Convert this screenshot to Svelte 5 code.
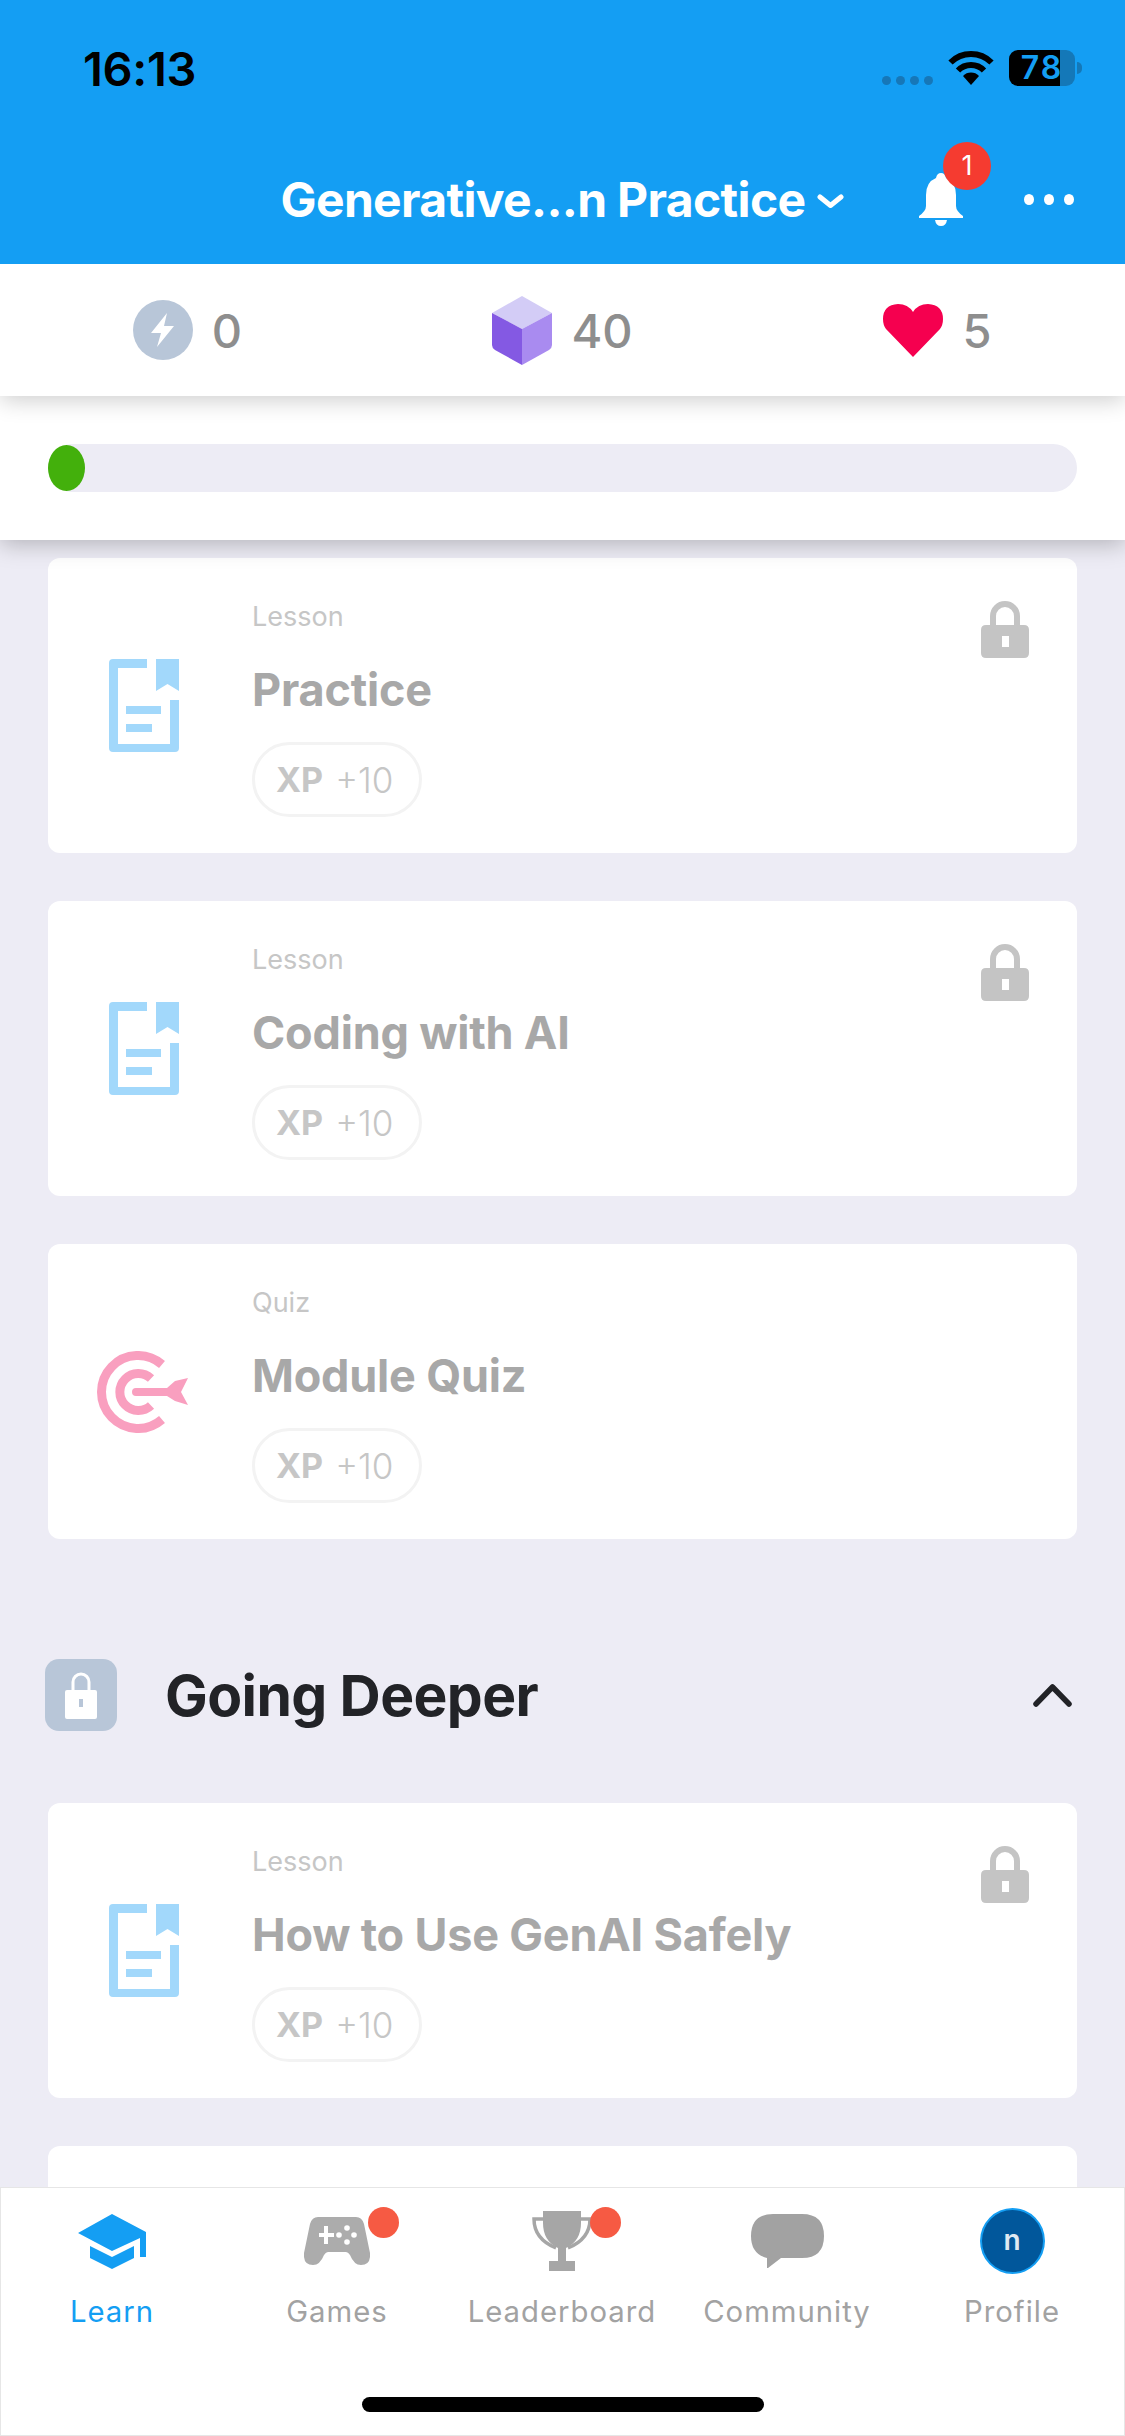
<script>
  const firstCards = [
    { kind: 'Lesson', title: 'Practice', icon: 'doc', locked: true },
    { kind: 'Lesson', title: 'Coding with AI', icon: 'doc', locked: true },
    { kind: 'Quiz', title: 'Module Quiz', icon: 'target', locked: false }
  ];
  const secondCards = [
    { kind: 'Lesson', title: 'How to Use GenAI Safely', icon: 'doc', locked: true }
  ];
  const tabs = [
    { label: 'Learn', icon: 'cap', active: true },
    { label: 'Games', icon: 'pad', dot: true },
    { label: 'Leaderboard', icon: 'trophy', dot: true },
    { label: 'Community', icon: 'chat' },
    { label: 'Profile', icon: 'avatar' }
  ];
</script>

{#snippet card(item)}
  <div class="card">
    <div class="card-icon">
      {#if item.icon === 'doc'}
        <svg width="70" height="93" viewBox="0 0 70 93">
          <path fill="#a2d8fb" d="M4 0H38V9H9V85H61V41H70V89Q70 93 66 93H4Q0 93 0 89V4Q0 0 4 0Z" />
          <path fill="#a2d8fb" d="M47 0H70V32L58.500 25L47 32Z" />
          <rect x="17" y="47" width="35" height="8" fill="#a2d8fb" />
          <rect x="17" y="65" width="26" height="8" fill="#a2d8fb" />
        </svg>
      {:else}
        <svg class="target" width="91" height="82" viewBox="0 0 91 82">
          <path fill="none" stroke="#f99fbf" stroke-width="9" d="M65 13.500A36.500 36.500 0 1 0 65 68.500" />
          <path fill="none" stroke="#f99fbf" stroke-width="9" d="M54 27.500A18.500 18.500 0 1 0 54 54.500" />
          <path fill="#f99fbf" d="M39 37H70L78 30L91 27L84 41L91 54L78 50L70 45H39A4 4 0 0 1 39 37Z" />
        </svg>
      {/if}
    </div>
    <div class="card-body">
      <div class="kind">{item.kind}</div>
      <div class="title">{item.title}</div>
      <div class="pill"><b>XP</b><span>+10</span></div>
    </div>
    {#if item.locked}
      <svg class="card-lock" width="48" height="57" viewBox="0 0 48 57">
        <path fill="none" stroke="#c4c4c4" stroke-width="6" d="M12 26V15A12 12 0 0 1 36 15V26" />
        <path fill="#c4c4c4" fill-rule="evenodd" d="M5 24H43Q48 24 48 29V52Q48 57 43 57H5Q0 57 0 52V29Q0 24 5 24ZM21 35V46H28V35Z" />
      </svg>
    {/if}
  </div>
{/snippet}

<div class="phone">
  <header class="top">
    <div class="status">
      <span class="time">16:13</span>
      <div class="status-right">
        <div class="cells"><i></i><i></i><i></i><i></i></div>
        <svg width="46" height="34" viewBox="0 0 46 34">
          <path fill="none" stroke="#000" stroke-width="6" d="M2.500 11.500A29 29 0 0 1 43.500 11.500" />
          <path fill="none" stroke="#000" stroke-width="6" d="M10 19.500A18 18 0 0 1 36 19.500" />
          <path d="M23 34L15 25A11 11 0 0 1 31 25Z" />
        </svg>
        <div class="battery">78</div>
        <div class="nub"></div>
      </div>
    </div>
    <div class="nav">
      <div></div>
      <div class="course">
        <span>Generative...n Practice</span>
        <svg width="27" height="14" viewBox="0 0 27 14">
          <path fill="none" stroke="#fff" stroke-width="5" stroke-linecap="round" stroke-linejoin="round" d="M3 3L13.500 11.500L24 3" />
        </svg>
      </div>
      <div class="actions">
        <div class="bell">
          <svg width="44" height="53" viewBox="0 0 44 53">
            <path fill="#fff" d="M22 0Q26 0 27 5Q37 9 37 22V33Q37 38 44 43V45H0V43Q7 38 7 33V22Q7 9 17 5Q18 0 22 0Z" />
            <path fill="#fff" d="M16 47H28Q27 53 22 53Q17 53 16 47Z" />
          </svg>
          <span class="bell-badge">1</span>
        </div>
        <div class="dots"><i></i><i></i><i></i></div>
      </div>
    </div>
  </header>

  <div class="stats">
    <div class="stat">
      <svg width="60" height="60" viewBox="0 0 60 60">
        <circle cx="30" cy="30" r="30" fill="#b8c6d8" />
        <path fill="#fff" d="M34 13L18 33H28L24 47L41 26H31Z" />
      </svg>
      <span>0</span>
    </div>
    <div class="stat">
      <svg width="60" height="69" viewBox="0 0 60 69">
        <path fill="#d3ccf6" d="M30 0L60 17L30 33L0 17Z" />
        <path fill="#8459e3" d="M0 17L30 33V69L3 54Q0 52 0 49Z" />
        <path fill="#a98bf0" d="M60 17L30 33V69L57 54Q60 52 60 49Z" />
      </svg>
      <span>40</span>
    </div>
    <div class="stat">
      <svg width="60" height="53" viewBox="0 0 60 53">
        <path fill="#f5004f" d="M30 53L3 25Q0 21 0 15Q0 1 15 0Q25 0 30 8Q35 0 45 0Q60 1 60 15Q60 21 57 25Z" />
      </svg>
      <span>5</span>
    </div>
  </div>

  <div class="progress">
    <div class="track"><div class="fill"></div></div>
  </div>

  <main class="list">
    <div class="cards">
      {#each firstCards as item}
        {@render card(item)}
      {/each}
    </div>
    <div class="section">
      <div class="section-lock">
        <svg width="32" height="48" viewBox="0 0 32 48">
          <path fill="none" stroke="#fff" stroke-width="3" d="M8 20V11A8 8 0 0 1 24 11V20" />
          <path fill="#fff" fill-rule="evenodd" d="M2 19H30Q32 19 32 21V46Q32 48 30 48H2Q0 48 0 46V21Q0 19 2 19ZM14 28V36H18V28Z" />
        </svg>
      </div>
      <h2>Going Deeper</h2>
      <svg width="39" height="24" viewBox="0 0 39 24">
        <path fill="none" stroke="#222327" stroke-width="5.500" stroke-linecap="round" stroke-linejoin="round" d="M3 21L19.500 4L36 21" />
      </svg>
    </div>
    <div class="cards">
      {#each secondCards as item}
        {@render card(item)}
      {/each}
      <div class="card"></div>
    </div>
  </main>

  <nav class="tabs">
    {#each tabs as tab}
      <div class="tab" class:active={tab.active}>
        <div class="tab-icon">
          {#if tab.icon === 'cap'}
            <svg width="68" height="55" viewBox="0 0 68 55">
              <path fill="#149ef3" d="M34 0L68 18V43H62V24L34 37L0 19Z" />
              <path fill="#149ef3" d="M12 32L34 43L56 32V44L34 55L12 44Z" />
            </svg>
          {:else if tab.icon === 'pad'}
            <svg width="66" height="48" viewBox="0 0 66 48">
              <path fill="#acacac" d="M14 0H52Q58 0 60 7L66 36Q67 48 57 48Q50 48 46 38Q44 35 42 35H24Q22 35 20 38Q16 48 9 48Q-1 48 0 36L6 7Q8 0 14 0Z" />
              <path fill="#fff" d="M20 9H24V16H30V20H24V27H20V20H15V16H20Z" />
              <circle cx="35" cy="18" r="2.800" fill="#fff" />
              <circle cx="43" cy="11" r="2.800" fill="#fff" />
              <circle cx="43" cy="25" r="2.800" fill="#fff" />
              <circle cx="50" cy="18" r="2.800" fill="#fff" />
            </svg>
          {:else if tab.icon === 'trophy'}
            <svg width="60" height="60" viewBox="0 0 60 60">
              <path fill="none" stroke="#a6a6a6" stroke-width="3.500" d="M12 8H2Q2 28 24 37M48 8H58Q58 28 36 37" />
              <path fill="#a6a6a6" d="M11 0H49V12Q49 30 34 37V50H43V60H17V50H26V37Q11 30 11 12Z" />
            </svg>
          {:else if tab.icon === 'chat'}
            <svg width="73" height="54" viewBox="0 0 73 54">
              <path fill="#a2a2a2" d="M22 0H51Q73 0 73 22Q73 44 51 44H30L17 54H16V44Q0 40 0 22Q0 0 22 0Z" />
            </svg>
          {:else}
            <div class="avatar">n</div>
          {/if}
          {#if tab.dot}<span class="dot"></span>{/if}
        </div>
        <span class="tab-label">{tab.label}</span>
      </div>
    {/each}
    <div class="home"></div>
  </nav>
</div>

<style>
  :global(body) {
    margin: 0;
    background: #edecf5;
  }
  .phone {
    width: 1125px;
    height: 2436px;
    display: flex;
    flex-direction: column;
    overflow: hidden;
    background: #edecf5;
    font-family: Inter, "Liberation Sans", sans-serif;
  }
  .top {
    height: 264px;
    flex-shrink: 0;
    background: #149ef3;
    position: relative;
    z-index: 3;
  }
  .status {
    height: 136px;
    display: flex;
    align-items: center;
    justify-content: space-between;
    padding: 0 43px 0 83px;
    box-sizing: border-box;
  }
  .time {
    font-size: 47px;
    font-weight: 600;
    color: #000;
    letter-spacing: -0.3px;
  }
  .status-right {
    display: flex;
    align-items: center;
  }
  .cells {
    display: flex;
    gap: 5px;
    margin: 24px 15px 0 0;
  }
  .cells i {
    width: 9px;
    height: 9px;
    border-radius: 50%;
    background: #1677b8;
  }
  .status-right svg {
    margin-right: 15px;
  }
  .battery {
    width: 66px;
    height: 36px;
    border-radius: 9px;
    background: linear-gradient(90deg, #000 77%, #1478b8 77%);
    color: #149ef3;
    font-size: 32px;
    font-weight: 600;
    letter-spacing: 2px;
    line-height: 36px;
    text-align: center;
  }
  .nub {
    width: 5px;
    height: 12px;
    margin-left: 2px;
    border-radius: 0 6px 6px 0;
    background: #1478b8;
  }
  .nav {
    display: grid;
    grid-template-columns: 1fr auto 1fr;
    align-items: center;
    height: 126px;
  }
  .course {
    display: flex;
    align-items: center;
    gap: 12px;
    color: #fff;
    font-size: 48px;
    font-weight: 700;
    letter-spacing: -0.65px;
  }
  .course svg {
    margin-top: 4px;
  }
  .actions {
    display: flex;
    justify-content: flex-end;
    align-items: center;
    padding-right: 51px;
  }
  .bell {
    position: relative;
    height: 53px;
    margin-right: 61px;
  }
  .bell-badge {
    position: absolute;
    left: 24px;
    top: -31px;
    width: 48px;
    height: 48px;
    border-radius: 50%;
    background: #f53b30;
    color: #fff;
    font-size: 27px;
    line-height: 48px;
    text-align: center;
  }
  .dots {
    display: flex;
    gap: 10px;
  }
  .dots i {
    width: 10px;
    height: 11px;
    border-radius: 50%;
    background: #fff;
  }
  .stats {
    height: 132px;
    flex-shrink: 0;
    display: grid;
    grid-template-columns: repeat(3, 1fr);
    background: #fff;
    position: relative;
    z-index: 2;
    box-shadow: 0 4px 22px rgba(0, 0, 0, 0.2);
  }
  .stat {
    display: flex;
    align-items: center;
    justify-content: center;
    gap: 19px;
    color: #8e8e8e;
    font-size: 47px;
    font-weight: 500;
  }
  .progress {
    height: 144px;
    flex-shrink: 0;
    display: flex;
    align-items: center;
    padding: 0 48px;
    box-sizing: border-box;
    background: #fff;
    position: relative;
    z-index: 1;
    box-shadow: 0 4px 22px rgba(0, 0, 0, 0.25);
  }
  .track {
    flex: 1;
    height: 48px;
    border-radius: 24px;
    background: #edecf5;
    display: flex;
    align-items: center;
  }
  .fill {
    width: 37px;
    height: 46px;
    border-radius: 50%;
    background: #43b00c;
  }
  .list {
    flex: 1;
    min-height: 0;
    overflow: hidden;
    padding: 18px 48px 0;
  }
  .cards {
    display: flex;
    flex-direction: column;
    gap: 48px;
  }
  .card {
    height: 295px;
    flex-shrink: 0;
    display: flex;
    background: #fff;
    border-radius: 12px;
  }
  .card-icon {
    width: 192px;
    margin-right: 12px;
    flex-shrink: 0;
    display: flex;
    align-items: center;
    justify-content: center;
  }
  .target {
    margin-left: -3px;
  }
  .card-body {
    flex: 1;
    padding-top: 41px;
  }
  .kind {
    font-size: 27px;
    line-height: 36px;
    color: #c6c6c6;
  }
  .title {
    margin-top: 25px;
    font-size: 45px;
    line-height: 60px;
    font-weight: 700;
    color: #a8a8a8;
    letter-spacing: -0.2px;
  }
  .pill {
    margin-top: 22px;
    width: 170px;
    height: 75px;
    box-sizing: border-box;
    border: 3px solid #f3f3f3;
    border-radius: 38px;
    padding-left: 21px;
    display: flex;
    align-items: center;
    gap: 12px;
    color: #c6c6c6;
  }
  .pill b {
    font-size: 34px;
    font-weight: 700;
  }
  .pill span {
    font-size: 35px;
    font-weight: 300;
  }
  .card-lock {
    margin: 43px 48px 0 0;
  }
  .section {
    display: flex;
    align-items: center;
    margin: 120px 5px 72px -3px;
    height: 72px;
  }
  .section-lock {
    width: 72px;
    height: 72px;
    border-radius: 14px;
    background: #b8c6d8;
    display: flex;
    align-items: center;
    justify-content: center;
  }
  .section h2 {
    flex: 1;
    margin: 0 0 0 48px;
    font-size: 57px;
    font-weight: 700;
    color: #222327;
    letter-spacing: -0.6px;
  }
  .tabs {
    height: 249px;
    flex-shrink: 0;
    box-sizing: border-box;
    display: grid;
    grid-template-columns: repeat(5, 225px);
    align-content: start;
    background: #fff;
    border: 1px solid #e6e6e6;
    position: relative;
    z-index: 4;
  }
  .tab {
    display: flex;
    flex-direction: column;
    align-items: center;
    padding: 20px 3px 0 0;
    color: #a2a2a2;
  }
  .tab.active {
    color: #149ef3;
  }
  .tab-icon {
    position: relative;
    height: 66px;
    display: flex;
    align-items: center;
    justify-content: center;
  }
  .dot {
    position: absolute;
    right: -29px;
    top: -1px;
    width: 31px;
    height: 31px;
    border-radius: 50%;
    background: #f65a43;
  }
  .tab-label {
    margin-top: 20px;
    font-size: 29.300px;
    line-height: 36px;
    letter-spacing: 1px;
  }
  .avatar {
    width: 65px;
    height: 66px;
    box-sizing: border-box;
    border-radius: 50%;
    border: 2px solid #149ef3;
    background: #01579b;
    color: #dfe9f2;
    font-size: 28px;
    font-weight: 600;
    line-height: 60px;
    text-align: center;
  }
  .home {
    position: absolute;
    left: 361px;
    top: 209px;
    width: 402px;
    height: 15px;
    border-radius: 8px;
    background: #000;
  }
</style>
